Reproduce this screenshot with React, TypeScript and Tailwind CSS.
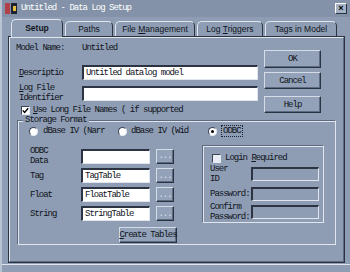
import React from "react";

const mono = "font-['Liberation_Mono',monospace] text-[9px] tracking-[-1px] leading-[10px] text-[#10141c]";

function Sunken({ value, white = true, className = "" }: { value?: string; white?: boolean; className?: string }) {
  return (
    <div
      className={`h-[15px] shrink-0 border-t-2 border-l-2 border-t-[#2c3444] border-l-[#2c3444] border-b border-r border-b-[#dfe6ee] border-r-[#dfe6ee] ${
        white ? "bg-white" : "bg-[#8e9db3]"
      } flex items-center pl-[2px] ${mono} ${className}`}
    >
      {value}
    </div>
  );
}

function Btn({ children, className = "" }: { children: React.ReactNode; className?: string }) {
  return (
    <div
      className={`flex items-center justify-center whitespace-nowrap border border-t-[#d4dce8] border-l-[#d4dce8] border-b-[#2a3344] border-r-[#2a3344] shadow-[inset_-1px_-1px_0_#5d6a80] bg-[#93a2b8] ${mono} ${className}`}
    >
      {children}
    </div>
  );
}

function Dots() {
  return <Btn className="w-[18px] h-[15px] text-[#dfe6ee]">...</Btn>;
}

function Radio({ on = false }: { on?: boolean }) {
  return (
    <div className="w-[9px] h-[9px] rounded-full bg-white border border-t-[#3a4456] border-l-[#3a4456] border-b-[#e4eaf2] border-r-[#e4eaf2] flex items-center justify-center">
      {on && <div className="w-[3px] h-[3px] rounded-full bg-black" />}
    </div>
  );
}

function Tab({ label, w, active = false, bold = false }: { label: React.ReactNode; w: string; active?: boolean; bold?: boolean }) {
  return (
    <div
      className={`${w} ${active ? "h-[18px] -mb-[1px] z-10 bg-[#8e9db3]" : "h-[15px]"} rounded-t-[5px] border-t border-l border-r border-t-[#dfe6ee] border-l-[#dfe6ee] border-r-[#2c3444] flex items-center justify-center font-['Liberation_Sans',Arial,sans-serif] text-[8.5px] text-[#10141c] ${
        bold ? "font-bold" : ""
      }`}
    >
      {label}
    </div>
  );
}

function OdbcRow({ label, value, className = "" }: { label: React.ReactNode; value?: string; className?: string }) {
  return (
    <div className={`flex items-center ${className}`}>
      <span className={`w-[51px] ${mono}`}>{label}</span>
      <Sunken value={value} className="w-[69px]" />
      <div className="ml-[6px]">
        <Dots />
      </div>
    </div>
  );
}

export default function App() {
  return (
    <div className="w-[350px] h-[272px] bg-[#8e9db3] flex flex-col overflow-hidden border-l-2 border-[#b8c4d4]">
      {/* title bar */}
      <div className="h-[17px] shrink-0 bg-[#8392a8] flex items-center pl-[3px] pr-[3px]">
        <div className="w-[12px] h-[11px] flex gap-[1px] mr-[4px]">
          <div className="w-[5px] h-full bg-[#b0404a]" />
          <div className="w-[6px] h-full bg-[#1c2230] flex items-center justify-center">
            <div className="w-[3px] h-[5px] bg-[#e8c040]" />
          </div>
        </div>
        <span className="font-['Liberation_Mono',monospace] text-[9px] tracking-[-1px] text-white">Untitled - Data Log Setup</span>
        <div className="ml-auto w-[12px] h-[11px] bg-[#a4b2c6] border border-t-white border-l-white border-b-[#2a3344] border-r-[#2a3344] flex items-center justify-center text-[9px] font-bold leading-none font-['Liberation_Sans',sans-serif]">
          ×
        </div>
      </div>

      {/* tabs */}
      <div className="flex items-end pl-[9px] mt-[2px] gap-[2px] h-[17px] shrink-0">
        <Tab label="Setup" w="w-[52px]" active bold />
        <Tab label="Paths" w="w-[48px]" />
        <Tab label={<span>File <u>M</u>anagement</span>} w="w-[80px]" />
        <Tab label={<span>Log <u>T</u>riggers</span>} w="w-[66px]" />
        <Tab label={<span>Ta<u>g</u>s in Model</span>} w="w-[72px]" />
      </div>

      {/* panel */}
      <div className="ml-[6px] mr-[5px] h-[227px] shrink-0 border border-[#2c3444] bg-[#8e9db3]">
        <div className="h-full border border-t-[#dfe6ee] border-l-[#dfe6ee] border-b-[#5d6a80] border-r-[#5d6a80] flex flex-col pl-[6px] pr-[4px]">
          <div className="flex h-[77px]">
            {/* left fields */}
            <div className="flex flex-col w-[243px]">
              <div className={`flex mt-[5px] h-[10px] ${mono}`}>
                <span className="w-[66px]">Model Name:</span>
                <span>Untitled</span>
              </div>
              <div className="flex items-center mt-[12px] h-[15px]">
                <span className={`w-[66px] pl-[3px] ${mono}`}>
                  <u>D</u>escriptio
                </span>
                <Sunken value="Untitled datalog model" className="w-[176px]" />
              </div>
              <div className="flex items-center mt-[3px] h-[20px]">
                <span className={`w-[66px] pl-[3px] ${mono}`}>
                  <u>L</u>og File
                  <br />
                  Identifier
                </span>
                <Sunken className="w-[176px]" />
              </div>
              <div className="flex items-center mt-[2px] h-[10px] pl-[5px] gap-[3px]">
                <div className="w-[9px] h-[9px] bg-white border border-t-[#3a4456] border-l-[#3a4456] border-b-[#e4eaf2] border-r-[#e4eaf2] flex items-center justify-center">
                  <svg width="7" height="7" viewBox="0 0 7 7">
                    <path d="M0.8 3.4 L2.6 5.4 L6.2 1.2" stroke="#000" strokeWidth="1.4" fill="none" />
                  </svg>
                </div>
                <span className={`${mono} whitespace-nowrap`}>
                  <u>U</u>se Long File Names ( if supported
                </span>
              </div>
            </div>
            {/* buttons */}
            <div className="flex flex-col ml-[5px] mt-[12px]">
              <Btn className="w-[57px] h-[18px]">OK</Btn>
              <Btn className="w-[57px] h-[17px] mt-[4px]">Cancel</Btn>
              <Btn className="w-[57px] h-[17px] mt-[7px]">Help</Btn>
            </div>
          </div>

          {/* storage format group */}
          <div className="relative mt-[5px] ml-[1px] mr-[3px] h-[125px] border border-t-[#5d6a80] border-l-[#5d6a80] border-b-[#dfe6ee] border-r-[#dfe6ee] shadow-[inset_1px_1px_0_#dfe6ee]">
            <span className={`absolute -top-[6px] left-[5px] px-[2px] bg-[#8e9db3] ${mono}`}>Storage Format</span>
            <div className="flex items-center mt-[5px] pl-[11px] h-[10px]">
              <Radio />
              <span className={`${mono} ml-[5px] w-[75px]`}>dBase IV (Narr</span>
              <Radio />
              <span className={`${mono} ml-[4px] w-[77px]`}>dBase IV (Wid</span>
              <Radio on />
              <span className={`${mono} ml-[4px] px-[1px] border border-dotted border-[#1c2230]`}>ODBC</span>
            </div>
            <div className="flex mt-[10px]">
              {/* odbc fields */}
              <div className="flex flex-col pl-[12px] w-[179px]">
                <OdbcRow
                  className="h-[20px]"
                  label={
                    <>
                      ODBC
                      <br />
                      Data
                    </>
                  }
                />
                <OdbcRow className="mt-[2px]" label="Tag" value="TagTable" />
                <OdbcRow className="mt-[4px]" label="Float" value="FloatTable" />
                <OdbcRow className="mt-[4px]" label="String" value="StringTable" />
                <Btn className="w-[58px] h-[16px] mt-[6px] ml-[89px]">
                  <span>
                    <u>C</u>reate Tables
                  </span>
                </Btn>
              </div>
              {/* login group */}
              <div className="w-[122px] h-[78px] -mt-[1px] ml-[5px] border border-t-[#5d6a80] border-l-[#5d6a80] border-b-[#dfe6ee] border-r-[#dfe6ee] shadow-[inset_1px_1px_0_#dfe6ee] flex flex-col pl-[7px] pr-[4px]">
                <div className="flex items-center mt-[7px] h-[10px] gap-[4px] pl-[2px]">
                  <div className="w-[9px] h-[9px] bg-[#e8edf3] border border-t-[#3a4456] border-l-[#3a4456] border-b-[#e4eaf2] border-r-[#e4eaf2]" />
                  <span className={mono}>
                    Login <u>R</u>equired
                  </span>
                </div>
                <div className="flex items-center mt-[3px] h-[16px]">
                  <span className={`w-[42px] ${mono} leading-[8px]`}>
                    User
                    <br />
                    ID
                  </span>
                  <Sunken white={false} className="w-[68px] !h-[14px]" />
                </div>
                <div className="flex items-center mt-[5px] h-[14px]">
                  <span className={`w-[42px] ${mono}`}>Password:</span>
                  <Sunken white={false} className="w-[68px] !h-[14px]" />
                </div>
                <div className="flex items-center mt-[1px] h-[20px]">
                  <span className={`w-[42px] ${mono}`}>
                    Confirm
                    <br />
                    Password:
                  </span>
                  <Sunken white={false} className="w-[68px] !h-[14px]" />
                </div>
              </div>
            </div>
          </div>
        </div>
      </div>
      <div className="flex-1 border-t border-[#dfe6ee] mt-[1px]" />
    </div>
  );
}
